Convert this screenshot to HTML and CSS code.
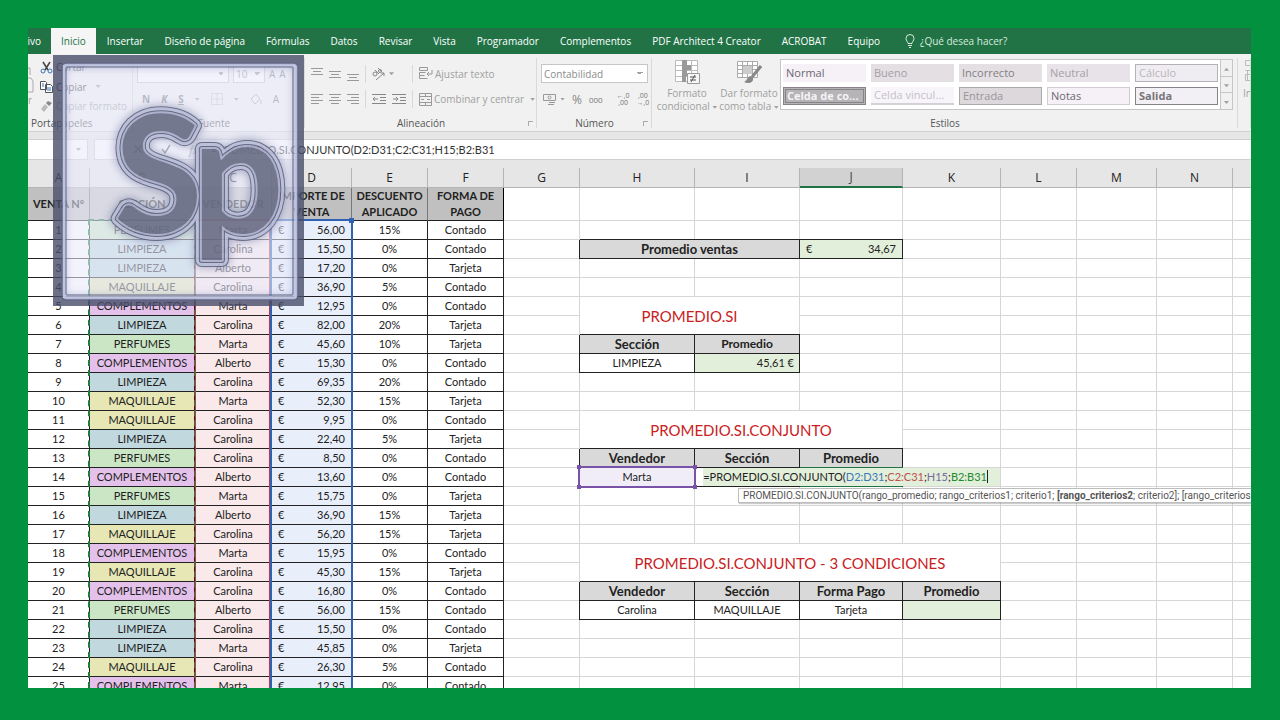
FILE: index.html
```
<!DOCTYPE html>
<html lang="es">
<head>
    <meta charset="UTF-8">
    <meta name="viewport" content="width=device-width, initial-scale=1.0">
    <title>PROMEDIO.SI.CONJUNTO</title>
    <link rel="stylesheet" href="styles.css">
</head>
<body>
    <main class="window">
        <nav class="tabs">
            <button class="tab tab-file">Archivo</button>
            <button class="tab active">Inicio</button>
            <button class="tab">Insertar</button>
            <button class="tab">Diseño de página</button>
            <button class="tab">Fórmulas</button>
            <button class="tab">Datos</button>
            <button class="tab">Revisar</button>
            <button class="tab">Vista</button>
            <button class="tab">Programador</button>
            <button class="tab">Complementos</button>
            <button class="tab">PDF Architect 4 Creator</button>
            <button class="tab">ACROBAT</button>
            <button class="tab">Equipo</button>
            <button class="tab tell-me">
                <svg width="10" height="14" viewBox="0 0 10 14" fill="none" stroke="currentColor"><path d="M3 9.500C3 7.500 1 7 1 4.500a4 4 0 0 1 8 0C9 7 7 7.500 7 9.500zM3 11.500h4M4 13.500h2"/></svg>
                ¿Qué desea hacer?
            </button>
        </nav>

        <div class="ribbon">
            <section class="group clipboard">
                <div class="group-body">
                    <button class="paste" aria-label="Pegar">
                        <svg width="6" height="26" viewBox="0 0 6 26" fill="none" stroke="#aaa"><path d="M0 1h2v7M0 11h3l2 3v11H0"/></svg>
                        <span>r</span>
                    </button>
                    <div class="stack">
                        <button class="dark">
                            <svg width="13" height="13" viewBox="0 0 13 13" fill="none"><path d="M3 1l5 8M10 1L5 9" stroke="#444" stroke-width="1.500"/><circle cx="3" cy="10" r="2" stroke="#3a74b5"/><circle cx="10" cy="10" r="2" stroke="#3a74b5"/></svg>
                            Cortar
                        </button>
                        <button class="dark">
                            <svg width="13" height="13" viewBox="0 0 13 13" fill="#fff" stroke="#555"><path d="M.5 1.500h5l1 1v7h-6zM5.500 4.500h5l2 2v6h-7z"/><path d="M2 4h2M2 6h2M7 8h4M7 10h4" stroke="#3a74b5"/></svg>
                            Copiar <i class="caret"></i>
                        </button>
                        <button>
                            <svg width="13" height="13" viewBox="0 0 13 13"><path d="M8 1l4 2-3 3-3-3z" fill="#888"/><path d="M5 4l3 3-4 5-3-3z" fill="#bbb"/></svg>
                            Copiar formato
                        </button>
                    </div>
                </div>
                <h2>Portapapeles</h2>
            </section>

            <section class="group font">
                <div class="group-body rows">
                    <div class="row">
                        <select class="font-name" aria-label="Fuente"><option></option></select>
                        <select class="font-size" aria-label="Tamaño"><option>10</option></select>
                        <button>A</button>
                        <button>A</button>
                    </div>
                    <div class="row letters">
                        <button><b>N</b></button>
                        <button><b><em>K</em></b></button>
                        <button><b><u>S</u></b></button>
                        <i class="caret"></i>
                        <svg width="12" height="12" viewBox="0 0 12 12" fill="none" stroke="#aaa"><path d="M.5.5h11v11H.5zM6 .5v11M.5 6h11" stroke-dasharray="1 1"/></svg>
                        <i class="caret"></i>
                        <svg width="12" height="12" viewBox="0 0 12 12" fill="none" stroke="#aaa"><path d="M1 6l5-5 4 5-5 5zM11 7v4"/></svg>
                        <button>A</button>
                    </div>
                </div>
                <h2>Fuente</h2>
            </section>

            <section class="group align">
                <div class="group-body rows">
                    <div class="row">
                        <button aria-label="Alinear arriba"><svg width="12" height="14" viewBox="0 0 12 14" stroke="#999"><path d="M0 1.500h12M2 4.500h8M0 7.500h12"/></svg></button>
                        <button aria-label="Alinear en el medio"><svg width="12" height="14" viewBox="0 0 12 14" stroke="#999"><path d="M0 4.500h12M2 7.500h8M0 10.500h12"/></svg></button>
                        <button aria-label="Alinear abajo"><svg width="12" height="14" viewBox="0 0 12 14" stroke="#999"><path d="M0 7.500h12M2 10.500h8M0 13.500h12"/></svg></button>
                        <span class="bar"></span>
                        <button aria-label="Orientación" class="orient"><svg width="14" height="14" viewBox="0 0 14 14" fill="none" stroke="#888"><circle cx="3" cy="7" r="2"/><path d="M3 3l4 4M6 1l4 4M4 13l8-7M12 9V6H9"/><circle cx="8" cy="4" r="1.500"/></svg><i class="caret"></i></button>
                        <span class="bar"></span>
                        <button class="text-btn"><svg width="14" height="13" viewBox="0 0 14 13" fill="none" stroke="#999"><path d="M.5.5h8v3h-8zM.5 5.500h6M.5 5.500v3h5M.5 8.500v3h8M13 3v4H8M10 5L8 7l2 2"/></svg>Ajustar texto</button>
                    </div>
                    <div class="row">
                        <button aria-label="Izquierda"><svg width="12" height="12" viewBox="0 0 12 12" stroke="#999"><path d="M0 1.500h12M0 4.500h8M0 7.500h12M0 10.500h8"/></svg></button>
                        <button aria-label="Centro"><svg width="12" height="12" viewBox="0 0 12 12" stroke="#999"><path d="M0 1.500h12M2 4.500h8M0 7.500h12M2 10.500h8"/></svg></button>
                        <button aria-label="Derecha"><svg width="12" height="12" viewBox="0 0 12 12" stroke="#999"><path d="M0 1.500h12M4 4.500h8M0 7.500h12M4 10.500h8"/></svg></button>
                        <span class="bar"></span>
                        <button aria-label="Disminuir sangría"><svg width="14" height="12" viewBox="0 0 14 12" fill="none" stroke="#888"><path d="M0 1.500h14M8 4.500h6M8 7.500h6M0 10.500h14M6 6H1M3 4L1 6l2 2"/></svg></button>
                        <button aria-label="Aumentar sangría"><svg width="14" height="12" viewBox="0 0 14 12" fill="none" stroke="#888"><path d="M0 1.500h14M8 4.500h6M8 7.500h6M0 10.500h14M1 6h5M4 4l2 2-2 2"/></svg></button>
                        <span class="bar"></span>
                        <button class="text-btn"><svg width="13" height="13" viewBox="0 0 13 13" fill="none" stroke="#999"><path d="M.5.5h12v12H.5zM.5 3.500h12M.5 9.500h12M6.500.5v3M6.500 9.500v3M2 6.500h3M8 6.500h3"/></svg>Combinar y centrar<i class="caret"></i></button>
                    </div>
                </div>
                <h2>Alineación</h2>
                <i class="launcher"></i>
            </section>

            <section class="group number">
                <div class="group-body rows">
                    <select class="format" aria-label="Formato de número"><option>Contabilidad</option></select>
                    <div class="row">
                        <button aria-label="Moneda" class="wide"><svg width="14" height="13" viewBox="0 0 14 13" fill="none" stroke="#999"><path d="M.5 1.500h12v6H.5z"/><circle cx="6.500" cy="4.500" r="1.500"/><path d="M6 9.500h6M5 11.500h6"/></svg><i class="caret"></i></button>
                        <button class="pct">%</button>
                        <button class="zeros">000</button>
                        <span class="bar"></span>
                        <button class="dec">←,0<br>,00</button>
                        <button class="dec">,00<br>→,0</button>
                    </div>
                </div>
                <h2>Número</h2>
                <i class="launcher"></i>
            </section>

            <section class="group styles">
                <div class="group-body">
                    <button class="big">
                        <svg width="26" height="26" viewBox="0 0 26 26" fill="none" stroke="#bbb"><path d="M1.500 1.500h22v21h-22zM1.500 6.500h22M1.500 11.500h22M1.500 17.500h22M8.500 1.500v21M17.500 1.500v21" fill="#fff"/><path d="M8 1h5v5H8zM8 6h9v5H8zM8 11h5v6H8zM8 17h4v6H8z" fill="#999" stroke="none"/><path d="M13.500 14.500h12v10h-12z" fill="#f6f6f6" stroke="#999"/><path d="M16 18h6M16 21h6M21 16l-4 7" stroke="#555"/></svg>
                        <span>Formato<br>condicional <i class="caret"></i></span>
                    </button>
                    <button class="big">
                        <svg width="26" height="26" viewBox="0 0 26 26" fill="none" stroke="#aaa"><path d="M1.500 2.500h20v16h-20zM1.500 6.500h20M1.500 10.500h20M1.500 14.500h20M6.500 2.500v16M11.500 2.500v16M16.500 2.500v16" fill="#fff"/><path d="M7 7h9v8H7z" fill="#ccc" stroke="none"/><path d="M25 7l-9 11" stroke="#888" stroke-width="3"/><path d="M15 17c-4 0-3 4-7 6 4 2 10 1 9-4z" fill="#888" stroke="none"/></svg>
                        <span>Dar formato<br>como tabla <i class="caret"></i></span>
                    </button>
                    <div class="gallery">
                        <div class="gallery-grid">
                            <button class="st normal">Normal</button>
                            <button class="st bueno">Bueno</button>
                            <button class="st incorrecto">Incorrecto</button>
                            <button class="st neutral">Neutral</button>
                            <button class="st calculo">Cálculo</button>
                            <button class="st celda-co">Celda de co...</button>
                            <button class="st celda-vin">Celda vincul...</button>
                            <button class="st entrada">Entrada</button>
                            <button class="st notas">Notas</button>
                            <button class="st salida">Salida</button>
                        </div>
                        <div class="gallery-scroll">
                            <button aria-label="Subir"><i class="caret up"></i></button>
                            <button aria-label="Bajar"><i class="caret"></i></button>
                            <button aria-label="Más"><i class="caret"></i></button>
                        </div>
                    </div>
                </div>
                <h2>Estilos</h2>
            </section>

            <section class="group cells">
                <button class="insert">
                    <svg width="16" height="26" viewBox="0 0 16 26" fill="none" stroke="#bbb"><path d="M2.500 2.500h13v5h-13zM2.500 12.500h13M4.500 12v10M2.500 16.500h13v6h-13z"/></svg>
                    <span>Insertar</span>
                </button>
            </section>
        </div>

        <div class="formula-bar">
            <div class="name-box"><i class="caret"></i></div>
            <div class="formula-tools">
                <button aria-label="Cancelar"><svg width="10" height="10" viewBox="0 0 10 10" stroke="#444" stroke-width="1.500"><path d="M1 1l8 8M9 1L1 9"/></svg></button>
                <button aria-label="Introducir"><svg width="10" height="10" viewBox="0 0 10 10" fill="none" stroke="#666" stroke-width="1.500"><path d="M1 5l3 4 5-8"/></svg></button>
                <button aria-label="Insertar función"><em>fx</em></button>
            </div>
            <input class="formula" type="text" aria-label="Barra de fórmulas" value="=PROMEDIO.SI.CONJUNTO(D2:D31;C2:C31;H15;B2:B31">
        </div>

        <div class="sheet">
            <table>
                <colgroup>
                    <col class="c-a"><col class="c-b"><col class="c-c"><col class="c-d"><col class="c-e"><col class="c-f"><col class="c-g"><col class="c-h"><col class="c-i"><col class="c-j"><col class="c-k"><col class="c-l"><col class="c-m"><col class="c-n"><col>
                </colgroup>
                <thead>
                    <tr class="letters-row" id="letters"></tr>
                    <tr class="titles-row">
                        <th>VENTA Nº</th>
                        <th>SECCIÓN</th>
                        <th>VENDEDOR</th>
                        <th>IMPORTE DE VENTA</th>
                        <th>DESCUENTO APLICADO</th>
                        <th>FORMA DE PAGO</th>
                        <td></td><td></td><td></td><td></td><td></td><td></td><td></td><td></td><td></td>
                    </tr>
                </thead>
                <tbody id="rows"></tbody>
            </table>
        </div>

        <div class="logo">
            <svg viewBox="0 0 251 251" role="img" aria-label="Sp">
                <defs>
                    <filter id="soft" x="-20%" y="-20%" width="140%" height="140%"><feGaussianBlur stdDeviation="4"/></filter>
                    <clipPath id="panel"><rect x="10" y="10" width="233" height="233" rx="3"/></clipPath>
                    <text id="word"><tspan x="61" y="178">S</tspan><tspan x="139" y="178">p</tspan></text>
                </defs>
                <path class="frame" fill-rule="evenodd" d="M0 0h251v251H0zM10 10v233h233V10z"/>
                <rect class="glass" x="10" y="10" width="233" height="233"/>
                <g clip-path="url(#panel)"><rect class="glow" x="9" y="9" width="235" height="235" filter="url(#soft)"/></g>
                <rect class="edge-light" x="11" y="10" width="232" height="233" rx="3"/>
                <rect class="edge" x="9" y="8" width="236" height="237" rx="3"/>
                <rect class="edge" x="13" y="12" width="227" height="228" rx="1"/>
                <g class="word">
                    <use href="#word" class="l-haze" filter="url(#soft)"/>
                    <use href="#word" class="l-rim"/>
                    <use href="#word" class="l-light"/>
                    <use href="#word" class="l-line"/>
                    <use href="#word" class="l-inner"/>
                    <use href="#word" class="l-core"/>
                </g>
            </svg>
        </div>
    </main>

    <script>
        const letters = 'ABCDEFGHIJKLMN'.split('');

        const sales = [
            ['PERFUMES', 'Marta', '56,00', '15%', 'Contado'],
            ['LIMPIEZA', 'Carolina', '15,50', '0%', 'Contado'],
            ['LIMPIEZA', 'Alberto', '17,20', '0%', 'Tarjeta'],
            ['MAQUILLAJE', 'Carolina', '36,90', '5%', 'Contado'],
            ['COMPLEMENTOS', 'Marta', '12,95', '0%', 'Contado'],
            ['LIMPIEZA', 'Carolina', '82,00', '20%', 'Tarjeta'],
            ['PERFUMES', 'Marta', '45,60', '10%', 'Tarjeta'],
            ['COMPLEMENTOS', 'Alberto', '15,30', '0%', 'Contado'],
            ['LIMPIEZA', 'Carolina', '69,35', '20%', 'Contado'],
            ['MAQUILLAJE', 'Marta', '52,30', '15%', 'Tarjeta'],
            ['MAQUILLAJE', 'Carolina', '9,95', '0%', 'Contado'],
            ['LIMPIEZA', 'Carolina', '22,40', '5%', 'Tarjeta'],
            ['PERFUMES', 'Carolina', '8,50', '0%', 'Contado'],
            ['COMPLEMENTOS', 'Alberto', '13,60', '0%', 'Contado'],
            ['PERFUMES', 'Marta', '15,75', '0%', 'Tarjeta'],
            ['LIMPIEZA', 'Alberto', '36,90', '15%', 'Tarjeta'],
            ['MAQUILLAJE', 'Carolina', '56,20', '15%', 'Tarjeta'],
            ['COMPLEMENTOS', 'Marta', '15,95', '0%', 'Contado'],
            ['MAQUILLAJE', 'Carolina', '45,30', '15%', 'Tarjeta'],
            ['COMPLEMENTOS', 'Carolina', '16,80', '0%', 'Contado'],
            ['PERFUMES', 'Alberto', '56,00', '15%', 'Contado'],
            ['LIMPIEZA', 'Carolina', '15,50', '0%', 'Contado'],
            ['LIMPIEZA', 'Marta', '45,85', '0%', 'Tarjeta'],
            ['MAQUILLAJE', 'Carolina', '26,30', '5%', 'Contado'],
            ['COMPLEMENTOS', 'Marta', '12,95', '0%', 'Contado']
        ];

        const empty = n => '<td></td>'.repeat(n);
        const euro = v => `<div class="money"><span>€</span><span>${v}</span></div>`;

        // Columnas H a O de cada fila
        const summary = {
            2: `<td class="box head big-text" colspan="2">Promedio ventas</td><td class="box result">${euro('34,67')}</td>` + empty(5),
            5: '<td class="title" colspan="2" rowspan="2">PROMEDIO.SI</td>' + empty(6),
            6: empty(6),
            7: '<td class="box head big-text">Sección</td><td class="box head">Promedio</td>' + empty(6),
            8: '<td class="box">LIMPIEZA</td><td class="box result right">45,61 €</td>' + empty(6),
            11: '<td class="title" colspan="3" rowspan="2">PROMEDIO.SI.CONJUNTO</td>' + empty(5),
            12: empty(5),
            13: '<td class="box head big-text">Vendedor</td><td class="box head big-text">Sección</td><td class="box head big-text">Promedio</td>' + empty(5),
            14: `<td class="box picked">Marta<span class="range purple"></span></td><td class="box"></td>
                <td class="box editing">
                    <div class="editor" contenteditable="true" spellcheck="false">=PROMEDIO.SI.CONJUNTO(<span class="ref-d">D2:D31</span>;<span class="ref-c">C2:C31</span>;<span class="ref-h">H15</span>;<span class="ref-b">B2:B31</span></div>
                    <div class="hint">PROMEDIO.SI.CONJUNTO(rango_promedio; rango_criterios1; criterio1; <b>[rango_criterios2</b>; criterio2]; [rango_criterios3; criterio3]; ...)</div>
                </td>` + empty(5),
            18: '<td class="title" colspan="4" rowspan="2">PROMEDIO.SI.CONJUNTO - 3 CONDICIONES</td>' + empty(4),
            19: empty(4),
            20: '<td class="box head big-text">Vendedor</td><td class="box head big-text">Sección</td><td class="box head big-text">Forma Pago</td><td class="box head big-text">Promedio</td>' + empty(4),
            21: '<td class="box">Carolina</td><td class="box">MAQUILLAJE</td><td class="box">Tarjeta</td><td class="box result"></td>' + empty(4)
        };

        document.getElementById('letters').innerHTML =
            letters.map(l => `<th class="${l === 'J' ? 'selected' : ''}">${l}</th>`).join('') + '<th></th>';

        document.getElementById('rows').innerHTML = sales.map((s, i) => {
            const n = i + 1;
            const range = color => n === 1 ? `<span class="range ${color}"></span>` : '';
            return `<tr>
                <td class="data">${n}</td>
                <td class="data ${s[0].toLowerCase()}">${s[0]}${range('green')}</td>
                <td class="data seller">${s[1]}${range('red')}</td>
                <td class="data amount">${euro(s[2])}${range('blue')}</td>
                <td class="data">${s[3]}</td>
                <td class="data">${s[4]}</td>
                <td></td>${summary[n] || empty(8)}
            </tr>`;
        }).join('');
    </script>
</body>
</html>
```
FILE: styles.css
```
* {
    box-sizing: border-box;
}

body {
    margin: 0;
    height: 100vh;
    padding: 28px 29px 32px 28px;
    background: #02923f;
    font-family: "Noto Sans", "Open Sans", sans-serif;
    font-size: 11px;
    color: #222;
}

button {
    border: 0;
    padding: 0;
    background: none;
    font: inherit;
    color: #a0a0a0;
    white-space: nowrap;
}

.window {
    position: relative;
    display: flex;
    flex-direction: column;
    height: 100%;
    overflow: hidden;
    background: #fff;
}

/* Pestañas */
.tabs {
    display: flex;
    flex: none;
    height: 26px;
    background: #217346;
    overflow: hidden;
    font-family: "Open Sans", sans-serif;
    font-size: 10px;
}

.tab {
    display: flex;
    align-items: center;
    flex: none;
    gap: 5px;
    padding: 0 10px 0 11px;
    color: #fff;
}

.tab-file {
    justify-content: flex-end;
    width: 23px;
    padding: 0 10px 0 0;
    overflow: hidden;
}

.tab.active {
    padding: 0 10px;
    background: #f4f5f4;
    color: #217346;
}

.tell-me {
    margin-left: 4px;
    color: #d8eadf;
}

/* Cinta de opciones */
.ribbon {
    display: flex;
    flex: none;
    height: 78px;
    background: #f1f1f1;
    border-bottom: 1px solid #d2d2d2;
    overflow: hidden;
    font-family: "Open Sans", sans-serif;
    font-size: 10px;
}

.group {
    position: relative;
    display: flex;
    flex-direction: column;
    flex: none;
    padding-top: 4px;
}

.group::after {
    content: "";
    position: absolute;
    top: 4px;
    right: 0;
    bottom: 3px;
    border-right: 1px solid #dadada;
}

.group h2 {
    margin: 0;
    height: 16px;
    text-align: center;
    font-size: 10px;
    line-height: 16px;
    font-weight: 400;
    color: #555;
}

.group-body {
    display: flex;
    flex: none;
    height: 57px;
}

.rows {
    flex-direction: column;
    justify-content: space-evenly;
}

.row {
    display: flex;
    align-items: center;
    gap: 6px;
    height: 20px;
}

.row svg, .stack svg {
    display: block;
    flex: none;
}

.bar {
    width: 1px;
    height: 18px;
    background: #d8d8d8;
}

.caret {
    display: inline-block;
    flex: none;
    width: 5px;
    height: 3px;
    background: #a0a0a0;
    clip-path: polygon(0 0, 100% 0, 50% 100%);
    vertical-align: middle;
}

.caret.up {
    clip-path: polygon(50% 0, 100% 100%, 0 100%);
}

.launcher {
    position: absolute;
    right: 4px;
    bottom: 5px;
    width: 5px;
    height: 5px;
    border-top: 1px solid #aaa;
    border-left: 1px solid #aaa;
}

.clipboard { width: 105px; }
.font { width: 172px; }
.align { width: 232px; }
.number { width: 115px; }
.styles { width: 586px; }
.cells { flex: 1; overflow: hidden; }

.clipboard h2 {
    padding-left: 3px;
    text-align: left;
}

.paste {
    width: 12px;
    text-align: left;
}

.paste svg, .paste span {
    display: block;
}

.stack {
    display: flex;
    flex-direction: column;
    justify-content: space-between;
}

.stack button {
    display: flex;
    align-items: center;
    gap: 3px;
    height: 18px;
}

.stack .dark {
    color: #333;
}

.stack .caret {
    margin-left: 6px;
}

.font .rows {
    padding-left: 4px;
}

.font .row {
    gap: 4px;
}

.font .letters {
    gap: 11px;
    padding-left: 5px;
}

.font button {
    color: #777;
}

.font h2 {
    padding-right: 10px;
}

select {
    appearance: none;
    height: 18px;
    padding: 0 2px;
    border: 1px solid #c6c6c6;
    border-radius: 0;
    background:
        linear-gradient(45deg, transparent 50%, #a0a0a0 50%) right 7px center / 3px 3px no-repeat,
        linear-gradient(-45deg, transparent 50%, #a0a0a0 50%) right 4px center / 3px 3px no-repeat,
        #fff;
    font: inherit;
    color: #8c8c8c;
}

.font-name { width: 92px; }
.font-size { width: 32px; }

.align .rows {
    padding-left: 6px;
}

.align .row > button:not(.text-btn) {
    display: flex;
    justify-content: center;
    width: 12px;
}

.align .row > .bar ~ button:not(.text-btn) {
    width: 14px;
}

.align .row > .bar ~ button.orient:not(.text-btn) {
    align-items: center;
    justify-content: flex-start;
    gap: 3px;
    width: 34px;
}

.text-btn {
    display: flex;
    align-items: center;
    gap: 2px;
}

.text-btn .caret {
    margin-left: 4px;
}

.number .rows {
    padding: 0 4px;
}

.format {
    width: 100%;
    height: 19px;
}

.number .row {
    gap: 7px;
    padding-left: 2px;
}

.wide {
    display: flex;
    align-items: center;
    gap: 3px;
}

.pct {
    font-size: 12px;
    color: #888;
}

.zeros {
    font-size: 8px;
    color: #777;
}

.dec {
    font-size: 7px;
    line-height: 7px;
    color: #777;
}

.big {
    display: flex;
    flex-direction: column;
    align-items: center;
    width: 62px;
    padding-top: 1px;
    line-height: 13px;
    gap: 2px;
}

.styles .group-body {
    padding-left: 4px;
}

.gallery {
    display: flex;
    height: 51px;
    margin-top: 1px;
    border: 1px solid #c6c6c6;
    background: #fff;
}

.gallery-grid {
    display: grid;
    grid-template-columns: repeat(5, 83px);
    gap: 5px;
    padding: 4px 2px;
}

.st {
    height: 18px;
    padding: 0 3px;
    text-align: left;
    overflow: hidden;
    font-size: 11px;
    line-height: 16px;
    color: #a5a0a5;
}

.normal, .notas { background: #f5f1f6; color: #6d6870; }
.bueno, .incorrecto { background: #e3dfe3; }
.incorrecto { color: #858085; }
.neutral { background: #e8e3e8; }
.calculo { background: #f0edf2; border: 1px solid #b5b1b5; color: #bbb5bb; }
.celda-co { background: #b6b4b6; border: 3px double #858385; color: #f5f3f5; font-weight: 700; line-height: 12px; padding: 0 1px; }
.celda-vin { background: #f8f5fa; border-bottom: 2px solid #d5d0d5; color: #c5c0c8; }
.entrada { background: #dcd8dc; border: 1px solid #aaa; color: #9a959a; }
.notas { border: 1px solid #d0ccd0; }
.salida { background: #f2f0f4; border: 1px solid #858388; color: #77747a; font-weight: 700; }

.gallery-scroll {
    display: flex;
    flex-direction: column;
    width: 12px;
    border-left: 1px solid #c6c6c6;
    background: #f1f1f1;
}

.gallery-scroll button {
    flex: 1;
    line-height: 8px;
}

.gallery-scroll button + button {
    border-top: 1px solid #c6c6c6;
}

.insert {
    display: flex;
    flex-direction: column;
    align-items: flex-start;
    gap: 2px;
    padding-left: 5px;
}

/* Barra de fórmulas */
.formula-bar {
    display: flex;
    flex: none;
    height: 36px;
    padding: 7px 0 8px;
    background: #e6e6e6;
}

.name-box {
    display: flex;
    align-items: center;
    justify-content: flex-end;
    width: 60px;
    padding-right: 6px;
    border: 1px solid #d0d0d0;
    border-left: 0;
    background: #fff;
}

.formula-tools {
    display: flex;
    align-items: center;
    justify-content: flex-end;
    gap: 18px;
    width: 116px;
    margin-left: 6px;
    padding-right: 12px;
    border: 1px solid #d0d0d0;
    border-right: 0;
    background: #fff;
}

.formula {
    flex: 1;
    min-width: 0;
    padding: 0 1px;
    border: 1px solid #d0d0d0;
    border-width: 1px 0;
    background: #fff;
    font-family: Lato, sans-serif;
    font-size: 11px;
    color: #333;
}

/* Hoja */
.sheet {
    flex: 1;
    min-height: 0;
    overflow: hidden;
    font-family: Lato, "Noto Sans", sans-serif;
    font-size: 11px;
}

table {
    width: 100%;
    table-layout: fixed;
    border-collapse: separate;
    border-spacing: 0;
}

.c-a { width: 62px; }
.c-b, .c-i { width: 105px; }
.c-c { width: 77px; }
.c-d, .c-m { width: 80px; }
.c-e, .c-f, .c-g, .c-l, .c-n { width: 76px; }
.c-h { width: 115px; }
.c-j { width: 103px; }
.c-k { width: 98px; }

td, th {
    position: relative;
    height: 19px;
    padding: 0;
    border-right: 1px solid #d6d6d6;
    border-bottom: 1px solid #d6d6d6;
    text-align: center;
    line-height: 18px;
    white-space: nowrap;
}

td:last-child, th:last-child {
    border-right: 0;
}

.letters-row th {
    height: 20px;
    background: #e6e6e6;
    border-color: #b4b4b4;
    font-family: "Open Sans", sans-serif;
    font-size: 12px;
    font-weight: 400;
}

.letters-row .selected {
    background: #d2d2d2;
    border-bottom: 2px solid #217346;
    color: #444;
}

.titles-row th, .titles-row td {
    height: 32px;
}

.titles-row th {
    background: #c0c0c0;
    border-right-color: #777;
    border-bottom-color: #222;
    font-size: 11px;
    line-height: 16px;
    white-space: normal;
}

.titles-row th:nth-child(6) {
    border-right-color: #000;
}

.data {
    border-color: #222;
}

.limpieza { background: #c1d8df; }
.perfumes { background: #cbe6c5; }
.complementos { background: #e4c1ea; }
.maquillaje { background: #e7e7b6; }
.seller { background: #f9e9ea; }
.amount { background: #e8effb; }

.money {
    display: flex;
    justify-content: space-between;
    padding: 0 6px;
}

.box {
    border-color: #222;
    box-shadow: -1px 0 0 #222, 0 -1px 0 #222;
}

.head {
    background: #d9d9d9;
    font-size: 12px;
    font-weight: 700;
}

.big-text {
    font-size: 13px;
}

.result {
    background: #e2efda;
}

.right {
    padding-right: 5px;
    text-align: right;
}

.title {
    font-size: 15px;
    color: #c9211e;
}

.picked {
    background: #f1edf8;
}

/* Rangos resaltados */
.range {
    position: absolute;
    z-index: 1;
    top: -2px;
    left: -2px;
    right: -2px;
    height: 600px;
    border: 2px solid;
    pointer-events: none;
}

.range.green {
    border-style: dashed;
    border-color: #1e7b3c;
}

.range.red {
    border-width: 2px 1px 1px;
    border-color: #c0394b;
    right: 1px;
    left: 0;
}

.range.blue {
    border-color: #2f62b5;
}

.range.blue::before {
    content: "";
    position: absolute;
    top: -3px;
    right: -3px;
    width: 5px;
    height: 5px;
    background: #2f62b5;
}

.range.purple {
    height: 22px;
    border-color: #7a52a8;
}

.range.purple::before, .range.purple::after {
    content: "";
    position: absolute;
    top: -3px;
    bottom: -3px;
    width: 4px;
    background: linear-gradient(#7a52a8 4px, transparent 4px calc(100% - 4px), #7a52a8 0);
}

.range.purple::before { left: -3px; }
.range.purple::after { right: -3px; }

.editing {
    border-bottom: 2px solid #217346;
    box-shadow: -1px 0 0 #222, 0 -1px 0 #217346;
}

.editor {
    position: absolute;
    z-index: 2;
    top: 0;
    right: -98px;
    width: 297px;
    height: 18px;
    padding-right: 12px;
    background: #e2efda;
    text-align: right;
    font-size: 11px;
    outline: 0;
}

.ref-d { color: #3f76b8; }
.ref-c { color: #c0504d; }
.ref-h { color: #7a6aa0; }
.ref-b { color: #1e8a2e; border-right: 1px solid #222; }

.hint {
    position: absolute;
    z-index: 3;
    top: 20px;
    left: -62px;
    height: 15px;
    padding: 0 4px;
    border: 1px solid #bdbdbd;
    background: #fff;
    box-shadow: 1px 1px 1px rgba(0, 0, 0, 0.2);
    font-family: Roboto, "Open Sans", sans-serif;
    font-size: 10px;
    line-height: 13px;
    color: #555;
}

/* Logotipo superpuesto */
.logo {
    position: absolute;
    z-index: 5;
    top: 27px;
    left: 25px;
    width: 251px;
}

.logo svg {
    display: block;
}

.frame { fill: rgba(72, 77, 106, 0.8); }
.glass { fill: rgba(232, 235, 252, 0.58); }
.glow { fill: none; stroke: rgba(110, 116, 165, 0.55); stroke-width: 6; }
.edge { fill: none; stroke: #5e6484; stroke-width: 1; }
.edge-light { fill: none; stroke: rgba(190, 196, 225, 0.9); stroke-width: 3; }

.word {
    opacity: 0.86;
    font-family: Lato, sans-serif;
    font-size: 162px;
    font-weight: 700;
    stroke-linejoin: round;
}

.l-haze { fill: none; stroke: rgba(80, 86, 135, 0.5); stroke-width: 16; }
.l-rim { fill: #565b78; stroke: #565b78; stroke-width: 14; }
.l-light { fill: #b4b9d4; stroke: #b4b9d4; stroke-width: 12; }
.l-line { fill: #4f5470; stroke: #4f5470; stroke-width: 6; }
.l-inner { fill: #a4a9c6; stroke: #a4a9c6; stroke-width: 4; }
.l-core { fill: #61667f; }
```
